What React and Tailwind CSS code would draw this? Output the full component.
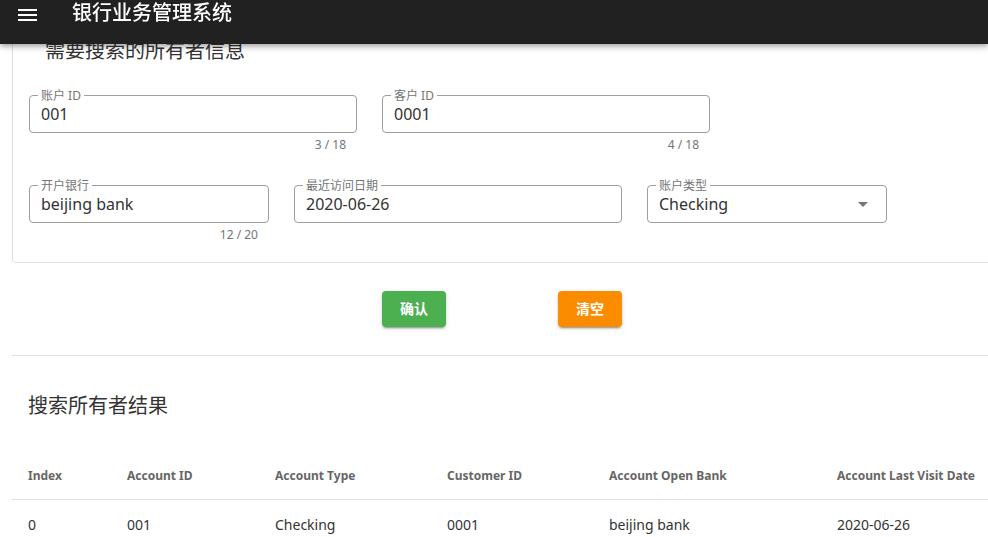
import React from "react";

const Field = ({ label, value, width, counter, select }) => {
  return (
    <div className={width}>
      <div className="relative h-[38px] border border-[#9e9e9e] rounded-[4px] flex items-center pl-[11px] pr-[12px]">
        <span className="absolute -top-[8px] left-[8px] px-[3px] bg-white text-[12px] leading-4 text-[#757575]">
          {label}
        </span>
        <span className="flex-1 text-[16px] text-[#333]">{value}</span>
        {select && (
          <svg viewBox="0 0 24 24" className="w-6 h-6 text-[#757575] mr-[-1px]">
            <path d="M7 10l5 5 5-5z" fill="currentColor" />
          </svg>
        )}
      </div>
      {counter && (
        <div className="mt-1 pr-[11px] text-right text-[12px] leading-4 text-[#757575]">
          {counter}
        </div>
      )}
    </div>
  );
};

const columns = [
  "Index",
  "Account ID",
  "Account Type",
  "Customer ID",
  "Account Open Bank",
  "Account Last Visit Date",
];

const rows = [["0", "001", "Checking", "0001", "beijing bank", "2020-06-26"]];

const App = () => {
  return (
    <div
      className="relative w-full h-[537px] overflow-hidden bg-white"
      style={{ fontFamily: '"Noto Sans", "Noto Sans CJK SC", sans-serif' }}
    >
      <header className="fixed top-0 left-0 right-0 z-10 h-[44px] bg-[#212121] shadow-[0_2px_4px_-1px_rgba(0,0,0,0.2),0_4px_5px_0_rgba(0,0,0,0.14),0_1px_10px_0_rgba(0,0,0,0.12)] flex items-start pt-[1px]">
        <div className="ml-[18px] mt-[8px] w-[19px] flex flex-col gap-[3px]">
          <span className="h-[2px] bg-white" />
          <span className="h-[2px] bg-white" />
          <span className="h-[2px] bg-white" />
        </div>
        <h1 className="ml-[35px] text-[20px] leading-6 text-white font-medium">
          银行业务管理系统
        </h1>
      </header>

      <main className="w-[980px] ml-3">
        <section className="border border-[#e0e0e0] rounded-[4px] pt-[34px] pb-[19px] px-4">
          <h2 className="pl-4 text-[20px] leading-8 text-[#333]">
            需要搜索的所有者信息
          </h2>
          <div className="mt-[28px] flex items-start gap-[25px]">
            <Field label="账户 ID" value="001" width="w-[328px]" counter="3 / 18" />
            <Field label="客户 ID" value="0001" width="w-[328px]" counter="4 / 18" />
          </div>
          <div className="mt-[32px] flex items-start gap-[25px]">
            <Field label="开户银行" value="beijing bank" width="w-[240px]" counter="12 / 20" />
            <Field label="最近访问日期" value="2020-06-26" width="w-[328px]" />
            <Field label="账户类型" value="Checking" width="w-[240px]" select />
          </div>
        </section>

        <div className="mt-[28px] flex justify-center gap-[112px]">
          <button className="w-16 h-9 rounded-[4px] bg-[#4caf50] text-white text-sm font-bold shadow-[0_3px_1px_-2px_rgba(0,0,0,0.2),0_2px_2px_0_rgba(0,0,0,0.14),0_1px_5px_0_rgba(0,0,0,0.12)]">
            确认
          </button>
          <button className="w-16 h-9 rounded-[4px] bg-[#fb8c00] text-white text-sm font-bold shadow-[0_3px_1px_-2px_rgba(0,0,0,0.2),0_2px_2px_0_rgba(0,0,0,0.14),0_1px_5px_0_rgba(0,0,0,0.12)]">
            清空
          </button>
        </div>

        <div className="mt-[28px] h-px bg-[#e0e0e0]" />

        <h2 className="mt-[34px] pl-4 text-[20px] leading-8 text-[#333]">
          搜索所有者结果
        </h2>

        <div className="mt-[30px]">
          <div className="grid grid-cols-[99px_148px_172px_162px_228px_1fr] h-12 items-center border-b border-[#e0e0e0] text-[12px] font-bold text-[#666]">
            {columns.map((c) => (
              <div key={c} className="px-4 whitespace-nowrap">
                {c}
              </div>
            ))}
          </div>
          {rows.map((r, i) => (
            <div
              key={i}
              className="grid grid-cols-[99px_148px_172px_162px_228px_1fr] h-12 items-center text-[14px] text-[#333]"
            >
              {r.map((v, j) => (
                <div key={j} className="px-4 whitespace-nowrap">
                  {v}
                </div>
              ))}
            </div>
          ))}
        </div>
      </main>
    </div>
  );
};

export default App;
